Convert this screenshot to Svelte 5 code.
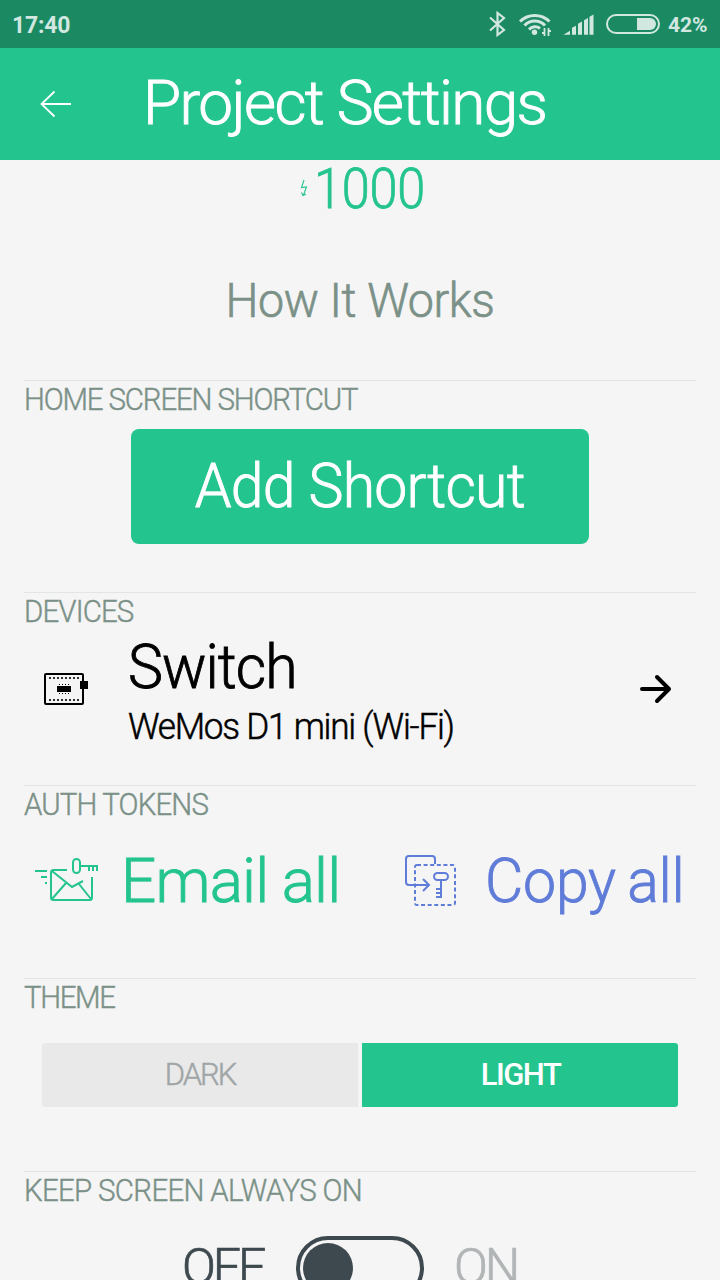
<script>
  const pins = [0, 1, 2, 3, 4, 5, 6, 7];
</script>

<div class="screen">
  <div class="status">
    <span class="clock">17:40</span>
    <svg class="status-icons" width="180" height="48" viewBox="484 0 180 48" fill="none" stroke="#d1e7e0">
      <path d="M490 17.500l14 12.500-6.500 5V13l6.500 5-14 12.500" stroke-width="2.200" />
      <g stroke-width="3">
        <path d="M520 21.500a21 21 0 0 1 29.500 0" />
        <path d="M524.500 25.500a14 14 0 0 1 20.500 0" />
        <path d="M529 29.500a8 8 0 0 1 11-1" />
      </g>
      <circle cx="534.500" cy="32.300" r="2.700" fill="#d1e7e0" stroke="none" />
      <path d="M544.500 28v8M548.500 28v8M542 33h2.500M548.500 31h2.500" stroke-width="1.800" />
      <g fill="#d1e7e0" stroke="none">
        <path d="M563.500 34.700l6.500-4v4z" />
        <path d="M572 34.700v-7l4-2v9zM578 34.700v-11l4-2.200v13.200zM584 34.700v-14.500l4-2.200v16.700zM589.500 34.700v-18l4-2.200v20.200z" />
      </g>
      <rect x="607" y="15" width="52" height="18" rx="9" stroke-width="2" />
      <path d="M637 18h13a6 6 0 0 1 0 12h-13z" fill="#d1e7e0" stroke="none" />
    </svg>
    <span class="percent">42%</span>
  </div>

  <header>
    <svg width="32" height="28" viewBox="0 0 32 28" fill="none" stroke="#fff" stroke-width="1.800">
      <path d="M31 14H1.500M14.500 1.500L1.500 14l13 12.500" />
    </svg>
    <h1>Project Settings</h1>
  </header>

  <section class="energy">
    <div class="amount">
      <svg width="8" height="18" viewBox="0 0 8 18" fill="none" stroke="#24c48e" stroke-width="1.100">
        <path d="M4 1L1.500 8.500l5-.5-3 8M1.500 13.500l1.500 3 3-1.500" />
      </svg>
      <span>1000</span>
    </div>
    <div class="how">How It Works</div>
  </section>

  <section class="shortcut">
    <h2>HOME SCREEN SHORTCUT</h2>
    <button class="add"><span>Add Shortcut</span></button>
  </section>

  <section class="devices">
    <h2>DEVICES</h2>
    <div class="device">
      <svg class="board" width="46" height="34" viewBox="0 0 46 34">
        <rect x="2" y="2" width="38" height="30" rx="1" fill="none" stroke="#000" stroke-width="2" />
        <rect x="37" y="9" width="8" height="8" />
        <rect x="14" y="14" width="14" height="6" />
        {#each pins as p}
          <rect x={6 + p * 4} y="5" width="2" height="2" fill="#333" />
          <rect x={6 + p * 4} y="27" width="2" height="2" fill="#333" />
        {/each}
        {#each [0, 1, 2, 3] as p}
          <rect x={16 + p * 3} y="12" width="1" height="1" />
          <rect x={16 + p * 3} y="21" width="1" height="1" />
        {/each}
      </svg>
      <div class="names">
        <div class="name">Switch</div>
        <div class="model">WeMos D1 mini (Wi-Fi)</div>
      </div>
      <svg class="go" width="34" height="30" viewBox="0 0 34 30" fill="none" stroke="#000" stroke-width="4" stroke-linecap="round" stroke-linejoin="round">
        <path d="M3 15h27M18 3l12 12L18 27" />
      </svg>
    </div>
  </section>

  <section class="tokens">
    <h2>AUTH TOKENS</h2>
    <div class="actions">
      <div class="email">
        <svg width="66" height="46" viewBox="34 857 66 46" fill="none" stroke="#24c48e" stroke-width="2">
          <path d="M35 871h12M41 877h6M45 883h2M67 870H53.500a2.500 2.500 0 0 0-2.500 2.500v25a2.500 2.500 0 0 0 2.500 2.500h36a2.500 2.500 0 0 0 2.500-2.500V877M52 871l20 16 11-6M66 883L52 899M79 884l12 15M81 866h17M89 866v5M93 866v5M97 866v5" />
          <rect x="73" y="859" width="7" height="14" rx="3.500" />
        </svg>
        <span>Email all</span>
      </div>
      <div class="copy">
        <svg width="54" height="54" viewBox="404 854 54 54" fill="none" stroke="#5f7cd8" stroke-width="2">
          <path d="M435 864v-5a3 3 0 0 0-3-3h-23a3 3 0 0 0-3 3v23a3 3 0 0 0 3 3h19M423 879l6 6-6 6M441 881v17M436 889h5M436 893h5M436 897h5" />
          <rect x="415" y="865" width="40" height="40" rx="2" stroke-dasharray="4 2.600" />
          <rect x="434" y="873" width="14" height="7" rx="3.500" />
        </svg>
        <span>Copy all</span>
      </div>
    </div>
  </section>

  <section class="theme">
    <h2>THEME</h2>
    <div class="segments">
      <div class="segment dark"><span>DARK</span></div>
      <div class="segment light"><span>LIGHT</span></div>
    </div>
  </section>

  <section class="awake">
    <h2>KEEP SCREEN ALWAYS ON</h2>
    <div class="switch-row">
      <span class="off">OFF</span>
      <div class="toggle"><div class="knob"></div></div>
      <span class="on">ON</span>
    </div>
  </section>
</div>

<style>
  :global(body) { margin: 0; background: #f5f5f5; }
  .screen { width: 720px; height: 1280px; overflow: hidden; background: #f5f5f5; font-family: Roboto, sans-serif; font-weight: 300; white-space: nowrap; display: flex; flex-direction: column; }
  h1, h2, .amount span, .how, .add, .name, .model, .actions span, .dark, .off, .on { -webkit-text-stroke: .014em currentColor; }
  /* Narrow the letterforms toward the condensed look of the app's typeface */
  h2, .name, .model, .copy span, .amount span { transform: scaleX(.95); transform-origin: left; }
  .how, .add span { transform: scaleX(.95); }
  svg { display: block; flex: none; }
  .status { height: 48px; flex: none; background: #1b8a63; color: #d1e7e0; display: flex; align-items: center; box-sizing: border-box; padding: 0 12px; }
  .clock { font-weight: 700; font-size: 23px; line-height: 48px; width: 472px; padding-top: 3px; letter-spacing: -.2px; }
  .percent { font-weight: 700; font-size: 21px; line-height: 48px; margin-left: 4px; padding-top: 2px; }
  header { height: 112px; flex: none; background: #24c48e; display: flex; align-items: center; padding-left: 40px; color: #fff; }
  h1 { margin: -2px 0 0 71px; font-weight: 300; font-size: 62px; line-height: 112px; letter-spacing: -1.6px; }
  section { flex: none; margin: 0 24px; border-top: 1px solid #e3e5e4; box-sizing: border-box; }
  h2 { margin: 0; font-weight: 300; font-size: 31px; line-height: 37px; height: 37px; color: #7b9188; letter-spacing: -.9px; }
  .shortcut h2 { letter-spacing: -1.2px; }
  .theme h2 { letter-spacing: -1.45px; }
  .awake h2 { letter-spacing: -.7px; }
  .energy { height: 220px; border: 0; }
  .amount { height: 56px; display: flex; align-items: center; padding-left: 276px; color: #24c48e; font-size: 56px; gap: 6px; }
  .amount span { padding-top: 2px; transform: scaleX(.9); letter-spacing: -.2px; }
  .how { height: 56px; line-height: 56px; margin-top: 57px; text-align: center; font-size: 49px; color: #7b9188; letter-spacing: -.4px; }
  .shortcut { height: 212px; }
  .add { display: block; box-sizing: border-box; width: 458px; height: 115px; margin: 11px auto 0; padding: 0 0 2px; border: 0; border-radius: 8px; background: #24c48e; color: #fff; font: 300 62px Roboto, sans-serif; letter-spacing: -.75px; }
  .add span { display: inline-block; }
  .devices { height: 193px; }
  .device { display: flex; color: #000; }
  .board { margin: 42px 0 0 19px; }
  .names { width: 512px; margin-left: 39px; }
  .name { font-size: 62px; line-height: 74px; letter-spacing: -1px; }
  .model { font-size: 37px; line-height: 46px; letter-spacing: -1.3px; }
  .go { margin: 44px 0 0 -1px; }
  .tokens { height: 193px; }
  .actions { display: flex; height: 116px; font-size: 62px; line-height: 116px; letter-spacing: -.8px; }
  .email, .copy { display: flex; }
  .email { color: #24c48e; width: 370px; margin-left: 10px; }
  .email svg { margin-top: 34px; }
  .email span { margin-left: 21px; word-spacing: -1px; }
  .copy { color: #5f7cd8; letter-spacing: -.2px; word-spacing: -3px; }
  .copy svg { margin-top: 31px; }
  .copy span { margin-left: 27px; }
  .theme { height: 193px; }
  .segments { display: flex; gap: 4px; margin: 27px 18px 0; height: 64px; }
  .segment { flex: 1; text-align: center; font-size: 31px; line-height: 64px; letter-spacing: -2px; }
  .dark { background: #e9e9e9; color: #a0a5a6; border-radius: 3px 0 0 3px; }
  .light { background: #24c48e; color: #fff; font-weight: 500; border-radius: 0 3px 3px 0; letter-spacing: -1.5px; text-indent: 1px; }
  .awake { height: 150px; }
  .switch-row { display: flex; margin-top: 27px; padding-left: 158px; font-size: 50px; line-height: 63px; letter-spacing: -3px; }
  .off { width: 114px; color: #3d494e; }
  .toggle { box-sizing: border-box; width: 128px; height: 64px; border: 4px solid #3d494e; border-radius: 32px; padding: 3px; }
  .knob { width: 50px; height: 50px; border-radius: 50%; background: #3d494e; }
  .on { margin-left: 30px; color: #b1b5b6; }
</style>
